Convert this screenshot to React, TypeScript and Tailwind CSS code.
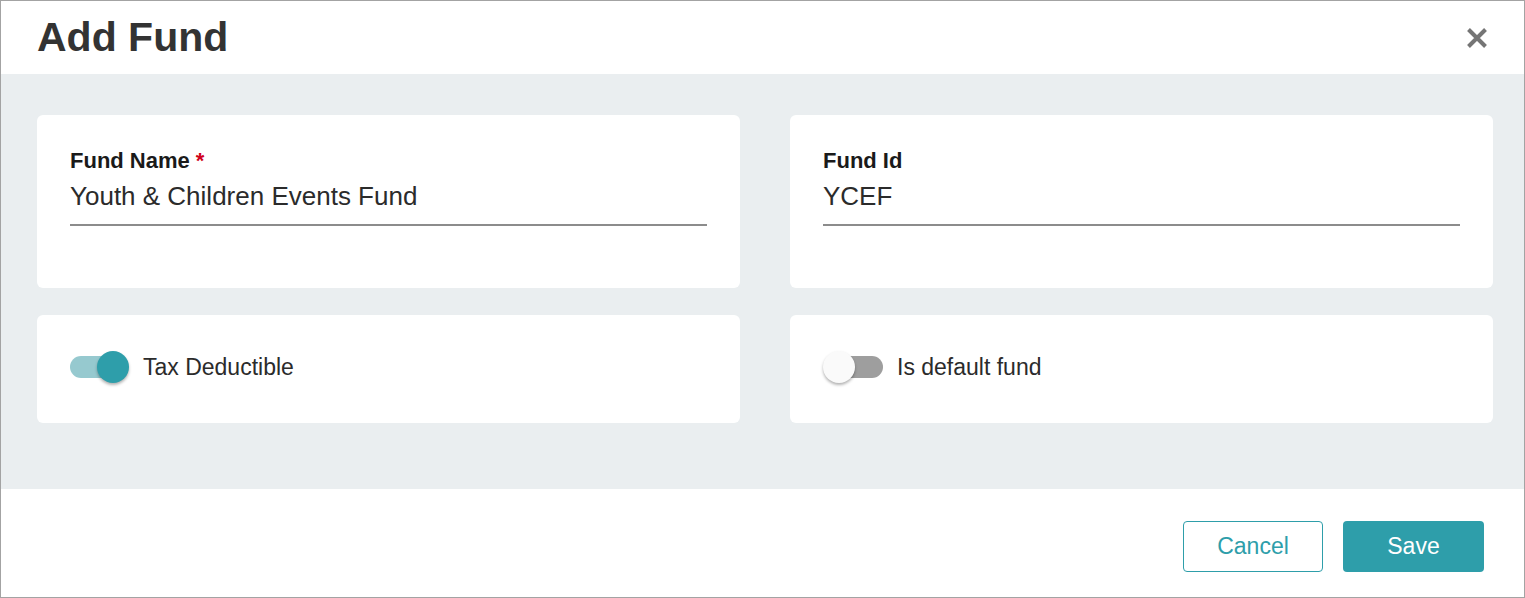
import React, { useState } from 'react'

const font = { fontFamily: '"Liberation Sans", Arial, sans-serif' }

function Toggle({ on, onChange }: { on: boolean; onChange: () => void }) {
  return (
    <button
      type="button"
      onClick={onChange}
      className="relative h-[22px] w-[60px] shrink-0"
      aria-pressed={on}
    >
      <span
        className={`absolute top-0 h-[22px] w-[50px] rounded-full ${
          on ? 'left-0 bg-[#96c9cf]' : 'left-[10px] bg-[#9e9e9e]'
        }`}
      />
      <span
        className={`absolute top-[-5px] h-[32px] w-[32px] rounded-full shadow-[0_2px_3px_rgba(0,0,0,0.3)] ${
          on ? 'right-[1px] bg-[#2e9eaa]' : 'left-0 bg-[#fafafa]'
        }`}
      />
    </button>
  )
}

function TextField({ label, value, required }: { label: string; value: string; required?: boolean }) {
  return (
    <div className="flex h-[173px] flex-col rounded-[6px] bg-white px-[33px] pt-[33px]">
      <label className="text-[22px] font-bold leading-[25px] text-[#1a1a1a]">
        {label}
        {required && <span className="ml-[6px] text-[#d0021b]">*</span>}
      </label>
      <div className="mt-[8px] border-b-2 border-[#8c8c8c] pb-[13px] text-[26px] leading-[30px] text-[#2b2b2b]">
        {value}
      </div>
    </div>
  )
}

function SwitchCard({ label, on, onChange }: { label: string; on: boolean; onChange: () => void }) {
  return (
    <div className="flex h-[108px] items-center rounded-[6px] bg-white px-[33px] pb-[4px]">
      <Toggle on={on} onChange={onChange} />
      <span className={`text-[23px] text-[#2b2b2b] ${on ? 'ml-[13px]' : 'ml-[14px]'}`}>{label}</span>
    </div>
  )
}

export default function App() {
  const [tax, setTax] = useState(true)
  const [def, setDef] = useState(false)

  return (
    <div style={font} className="flex h-[598px] w-[1525px] flex-col border border-[#a3a3a3] bg-white">
      {/* Header */}
      <div className="flex h-[73px] shrink-0 items-center justify-between pl-[36px] pr-[35px]">
        <h1 className="text-[41px] font-bold leading-none text-[#333333]">Add Fund</h1>
        <button type="button" className="flex h-[24px] w-[24px] items-center justify-center" aria-label="Close">
          <svg viewBox="0 0 22 22" width="22" height="22">
            <path d="M2.5 2.5 L19.5 19.5 M19.5 2.5 L2.5 19.5" stroke="#757575" strokeWidth="4" strokeLinecap="butt" />
          </svg>
        </button>
      </div>

      {/* Body */}
      <div className="h-[415px] shrink-0 bg-[#eaeef0] pl-[36px] pr-[31px] pt-[41px]">
        <div className="grid grid-cols-2 gap-x-[50px] gap-y-[27px]">
          <TextField label="Fund Name" value="Youth & Children Events Fund" required />
          <TextField label="Fund Id" value="YCEF" />
          <SwitchCard label="Tax Deductible" on={tax} onChange={() => setTax(!tax)} />
          <SwitchCard label="Is default fund" on={def} onChange={() => setDef(!def)} />
        </div>
      </div>

      {/* Footer */}
      <div className="flex flex-1 items-start justify-end gap-[20px] pr-[40px] pt-[32px]">
        <button
          type="button"
          className="h-[51px] w-[140px] rounded-[4px] border border-[#2e9eaa] bg-white text-[23px] text-[#2e9eaa]"
        >
          Cancel
        </button>
        <button
          type="button"
          className="h-[51px] w-[141px] rounded-[4px] bg-[#2e9eaa] text-[23px] text-white"
        >
          Save
        </button>
      </div>
    </div>
  )
}
